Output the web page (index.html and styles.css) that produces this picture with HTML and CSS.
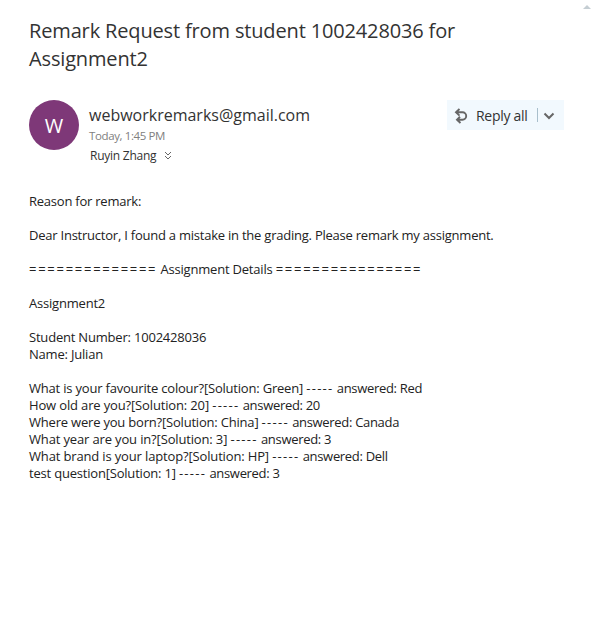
FILE: index.html
```html
<!DOCTYPE html>
<html lang="en">
<head>
<meta charset="utf-8">
<title>Remark Request</title>
<link rel="stylesheet" href="styles.css">
</head>
<body>
<svg class="scroll-up" viewBox="0 0 8 4"><path d="M4 0L8 4H0z"/></svg>
<main class="message">
  <h1 class="subject">Remark Request from student 1002428036 for<br>Assignment2</h1>
  <header class="head">
    <div class="avatar">W</div>
    <div class="sender">
      <div class="from">webworkremarks@gmail.com</div>
      <div class="date">Today, 1:45 PM</div>
      <div class="to"><span class="name">Ruyin Zhang</span><svg class="expand" viewBox="0 0 8 9"><path d="M1 1l3 3 3-3M1 5l3 3 3-3"/></svg></div>
    </div>
    <div class="reply">
      <svg class="reply-icon" viewBox="0 0 14 16"><path d="M5.500 1L2 4.300 5.500 7.600M2.200 4.300h6.300a3.700 3.700 0 0 1 0 7.400H3.500M6 8.800L3 11.700l3.500 3.300"/></svg>
      <span class="reply-label">Reply all</span>
      <span class="divider"></span>
      <svg class="chevron" viewBox="0 0 12 8"><path d="M1.500 1.500L6 6l4.500-4.500"/></svg>
    </div>
  </header>
  <div class="body">
    <p class="wide">Reason for remark:</p>
    <p class="wide">Dear Instructor, I found a mistake in the grading. Please remark my assignment.</p>
    <p><span class="eq">==============</span> Assignment Details <span class="eq">================</span></p>
    <p>Assignment2</p>
    <p>Student Number: 1002428036<br>Name: Julian</p>
    <p>What is your favourite colour?[Solution: Green] <span class="dash">-----</span> <span class="answer">answered: Red</span><br>
    <span class="loose">How old are you?[Solution: 20]</span> <span class="dash">-----</span> <span class="answer">answered: 20</span><br>
    Where were you born?[Solution: China] <span class="dash">-----</span> <span class="answer">answered: Canada</span><br>
    <span class="loose">What year are you in?[Solution: 3]</span> <span class="dash">-----</span> <span class="answer">answered: 3</span><br>
    <span class="loose">What brand is your laptop?[Solution: HP]</span> <span class="dash">-----</span> <span class="answer">answered: Dell</span><br>
    test question[Solution: 1] <span class="dash">-----</span> <span class="answer">answered: 3</span></p>
  </div>
</main>
</body>
</html>
```
FILE: styles.css
```css
body { margin: 0; background: #fff; color: #333; font-family: "Open Sans", "Noto Sans", sans-serif; height: 629px; overflow: hidden; }
.scroll-up { position: absolute; top: 5px; right: 2px; width: 8px; height: 4px; fill: #c5ced3; }
.message { padding: 17px 29px 0; white-space: nowrap; }
.subject { margin: 0; font-size: 20px; font-weight: 400; line-height: 28px; letter-spacing: -.15px; }
.head { display: flex; height: 65px; margin-top: 27px; }
.avatar { width: 50px; height: 50px; border-radius: 50%; background: #7e3878; color: #fff; font-size: 20px; line-height: 51px; text-align: center; }
.sender { margin-left: 10px; padding-top: 4px; }
.from { font-size: 16px; line-height: 22px; }
.date { font-size: 11.5px; line-height: 20px; color: #808080; letter-spacing: -.38px; }
.to { display: flex; align-items: center; font-size: 12px; line-height: 19px; padding-left: 1px; letter-spacing: -.25px; }
.expand { width: 8px; height: 9px; margin-left: 8px; fill: none; stroke: #666; }
.reply { display: flex; align-items: center; margin-left: auto; width: 117px; height: 30px; background: #f2f9fe; box-sizing: border-box; padding-left: 7px; }
.reply-icon { width: 14px; height: 16px; margin-top: 1px; fill: none; stroke: #666; stroke-width: 1.9; }
.reply-label { width: 52px; font-size: 14px; line-height: 30px; margin: 1px 0 0 8px; letter-spacing: -.3px; }
.divider { width: 1px; height: 14px; background: #a9bfcc; margin-left: 9px; }
.chevron { width: 12px; height: 8px; margin-left: 5px; margin-top: 1px; fill: none; stroke: #666; stroke-width: 2; }
.body { margin-top: 28px; font-size: 13px; line-height: 17px; letter-spacing: -.2px; color: #222; }
.body p { margin: 0 0 17px; }
.wide { letter-spacing: -.23px; }
.loose { letter-spacing: -.15px; }
.eq { letter-spacing: 1.73px; }
.dash { letter-spacing: 1.28px; }
.answer { letter-spacing: -.31px; }
```
